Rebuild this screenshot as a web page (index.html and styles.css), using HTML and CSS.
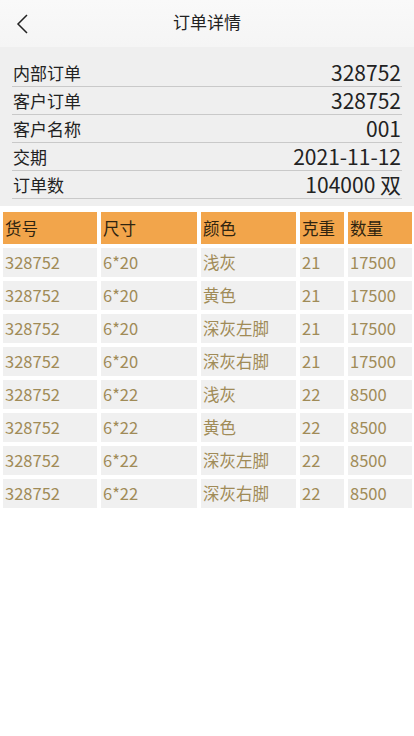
FILE: index.html
```html
<!DOCTYPE html>
<html lang="zh">
<head>
<meta charset="utf-8">
<title>订单详情</title>
<link rel="stylesheet" href="styles.css">
</head>
<body>
<header class="topbar">
  <span class="back">
    <svg width="14" height="22" viewBox="0 0 14 22"><polyline points="11,2 2,11 11,20" fill="none" stroke="#222" stroke-width="1.5" stroke-linejoin="miter"/></svg>
  </span>
  <h1 class="title">订单详情</h1>
</header>
<section class="info">
  <div class="row"><span class="label">内部订单</span><span class="value">328752</span></div>
  <div class="row"><span class="label">客户订单</span><span class="value">328752</span></div>
  <div class="row"><span class="label">客户名称</span><span class="value">001</span></div>
  <div class="row"><span class="label">交期</span><span class="value">2021-11-12</span></div>
  <div class="row"><span class="label">订单数</span><span class="value">104000 双</span></div>
</section>
<section class="grid">
  <div class="th">货号</div><div class="th">尺寸</div><div class="th">颜色</div><div class="th">克重</div><div class="th">数量</div>
  <div class="td">328752</div><div class="td">6*20</div><div class="td">浅灰</div><div class="td">21</div><div class="td">17500</div>
  <div class="td">328752</div><div class="td">6*20</div><div class="td">黄色</div><div class="td">21</div><div class="td">17500</div>
  <div class="td">328752</div><div class="td">6*20</div><div class="td">深灰左脚</div><div class="td">21</div><div class="td">17500</div>
  <div class="td">328752</div><div class="td">6*20</div><div class="td">深灰右脚</div><div class="td">21</div><div class="td">17500</div>
  <div class="td">328752</div><div class="td">6*22</div><div class="td">浅灰</div><div class="td">22</div><div class="td">8500</div>
  <div class="td">328752</div><div class="td">6*22</div><div class="td">黄色</div><div class="td">22</div><div class="td">8500</div>
  <div class="td">328752</div><div class="td">6*22</div><div class="td">深灰左脚</div><div class="td">22</div><div class="td">8500</div>
  <div class="td">328752</div><div class="td">6*22</div><div class="td">深灰右脚</div><div class="td">22</div><div class="td">8500</div>
</section>
</body>
</html>
```
FILE: styles.css
```css
html, body {
  margin: 0;
  padding: 0;
  background: #ffffff;
  font-family: "Noto Sans CJK SC", "Noto Sans", sans-serif;
  color: #222;
}
.topbar {
  height: 47px;
  background: linear-gradient(#f9f9f9, #f5f5f5);
  display: flex;
  align-items: center;
  justify-content: center;
  position: relative;
}
.back {
  position: absolute;
  left: 16px;
  top: 13px;
  width: 14px;
  height: 22px;
}
.back svg { display: block; }
.title {
  margin: 0;
  font-size: 17px;
  font-weight: 400;
  color: #222;
  line-height: 1;
  margin-top: -4px;
}
.info {
  background: #efefef;
  padding: 12px 12px 7px 12px;
}
.row {
  display: flex;
  justify-content: space-between;
  align-items: center;
  height: 27px;
  border-bottom: 1px solid #c9c9c9;
}
.label {
  font-size: 17px;
  padding-left: 1px;
  line-height: 1;
}
.value {
  font-size: 21px;
  padding-right: 1px;
  line-height: 1;
}
.grid {
  display: grid;
  grid-template-columns: 94px 96px 95px 44px 64px;
  grid-auto-rows: 29px;
  grid-template-rows: 32px;
  column-gap: 4px;
  row-gap: 4px;
  padding: 6px 2px 0 3px;
}
.th {
  background: #f2a54b;
  color: #2f2410;
  font-size: 16.5px;
  line-height: 32px;
  padding-left: 2px;
}
.td {
  background: #f0f0f0;
  color: #a08b57;
  font-size: 16.5px;
  line-height: 29px;
  padding-left: 2px;
  white-space: nowrap;
}
```
